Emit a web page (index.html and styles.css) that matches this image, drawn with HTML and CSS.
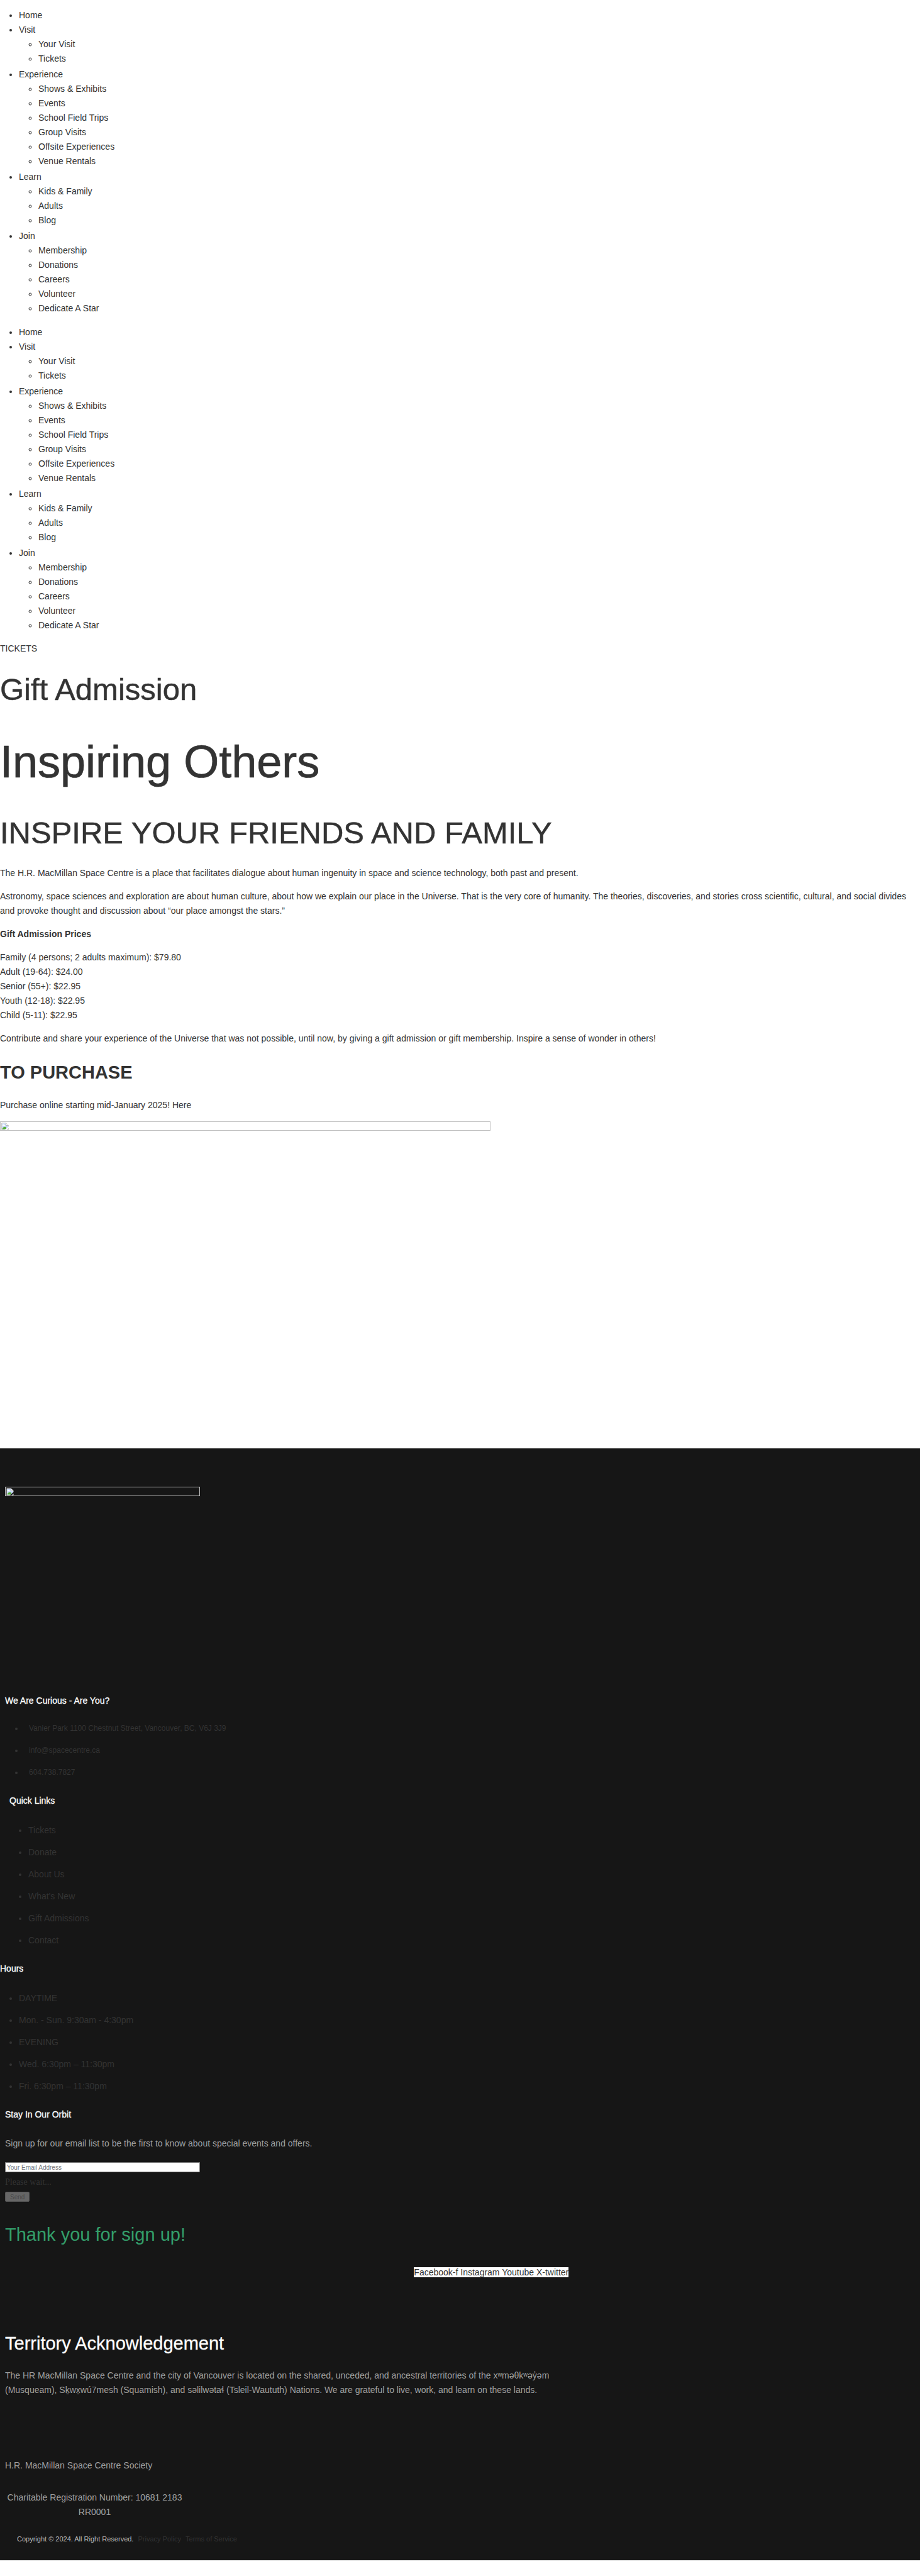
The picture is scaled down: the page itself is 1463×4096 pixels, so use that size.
FILE: index.html
```html
<!DOCTYPE html>
<html lang="en">
<head>
<meta charset="utf-8">
<title>Gift Admission - H.R. MacMillan Space Centre</title>
<link rel="stylesheet" href="styles.css">
</head>
<body>
<header>
  <nav aria-label="Main">
    <ul class="menu">
      <li><a href="#">Home</a></li>
      <li><a href="#">Visit</a>
        <ul class="submenu">
          <li><a href="#">Your Visit</a></li>
          <li><a href="#">Tickets</a></li>
        </ul>
      </li>
      <li><a href="#">Experience</a>
        <ul class="submenu">
          <li><a href="#">Shows &amp; Exhibits</a></li>
          <li><a href="#">Events</a></li>
          <li><a href="#">School Field Trips</a></li>
          <li><a href="#">Group Visits</a></li>
          <li><a href="#">Offsite Experiences</a></li>
          <li><a href="#">Venue Rentals</a></li>
        </ul>
      </li>
      <li><a href="#">Learn</a>
        <ul class="submenu">
          <li><a href="#">Kids &amp; Family</a></li>
          <li><a href="#">Adults</a></li>
          <li><a href="#">Blog</a></li>
        </ul>
      </li>
      <li><a href="#">Join</a>
        <ul class="submenu">
          <li><a href="#">Membership</a></li>
          <li><a href="#">Donations</a></li>
          <li><a href="#">Careers</a></li>
          <li><a href="#">Volunteer</a></li>
          <li><a href="#">Dedicate A Star</a></li>
        </ul>
      </li>
    </ul>
  </nav>
  <nav aria-label="Mobile">
    <ul class="menu">
      <li><a href="#">Home</a></li>
      <li><a href="#">Visit</a>
        <ul class="submenu">
          <li><a href="#">Your Visit</a></li>
          <li><a href="#">Tickets</a></li>
        </ul>
      </li>
      <li><a href="#">Experience</a>
        <ul class="submenu">
          <li><a href="#">Shows &amp; Exhibits</a></li>
          <li><a href="#">Events</a></li>
          <li><a href="#">School Field Trips</a></li>
          <li><a href="#">Group Visits</a></li>
          <li><a href="#">Offsite Experiences</a></li>
          <li><a href="#">Venue Rentals</a></li>
        </ul>
      </li>
      <li><a href="#">Learn</a>
        <ul class="submenu">
          <li><a href="#">Kids &amp; Family</a></li>
          <li><a href="#">Adults</a></li>
          <li><a href="#">Blog</a></li>
        </ul>
      </li>
      <li><a href="#">Join</a>
        <ul class="submenu">
          <li><a href="#">Membership</a></li>
          <li><a href="#">Donations</a></li>
          <li><a href="#">Careers</a></li>
          <li><a href="#">Volunteer</a></li>
          <li><a href="#">Dedicate A Star</a></li>
        </ul>
      </li>
    </ul>
  </nav>
  <a href="#">TICKETS</a>
</header>
<main class="content">
  <h1 class="title">Gift Admission</h1>
  <h2 class="display">Inspiring Others</h2>
  <h2 class="title">INSPIRE YOUR FRIENDS AND FAMILY</h2>
  <p>The H.R. MacMillan Space Centre is a place that facilitates dialogue about human ingenuity in space and science technology, both past and present.</p>
  <p>Astronomy, space sciences and exploration are about human culture, about how we explain our place in the Universe. That is the very core of humanity. The theories, discoveries, and stories cross scientific, cultural, and social divides and provoke thought and discussion about “our place amongst the stars.”</p>
  <p><strong>Gift Admission Prices</strong></p>
  <p>Family (4 persons; 2 adults maximum): $79.80<br>Adult (19-64): $24.00<br>Senior (55+): $22.95<br>Youth (12-18): $22.95<br>Child (5-11): $22.95</p>
  <p>Contribute and share your experience of the Universe that was not possible, until now, by giving a gift admission or gift membership. Inspire a sense of wonder in others!</p>
  <h3 class="subtitle">TO PURCHASE</h3>
  <p>Purchase online starting mid-January 2025! <a href="#">Here</a></p>
  <div class="photo">
    <svg class="missing" viewBox="0 0 16 16" aria-hidden="true"><path d="M1 1h9l5 5v9H1z" fill="#fff" stroke="#a3a3a3"/><path d="M2 2h8v4h4v8H2z" fill="#c3d5f7"/><path d="M3 6a2 2 0 0 1 4-1q2 0 2 2H3z" fill="#fff"/><path d="M2 14q1-5 6-5 3 0 3 5z" fill="#54ad35"/><path d="M10 1v5h5" fill="#fff" stroke="#a3a3a3"/><path d="M7 16l9-8v3l-5 5z" fill="#fff"/></svg>
  </div>
</main>
<footer class="footer">
  <div class="photo logo">
    <svg class="missing" viewBox="0 0 16 16" aria-hidden="true"><path d="M1 1h9l5 5v9H1z" fill="#fff" stroke="#a3a3a3"/><path d="M2 2h8v4h4v8H2z" fill="#c3d5f7"/><path d="M3 6a2 2 0 0 1 4-1q2 0 2 2H3z" fill="#fff"/><path d="M2 14q1-5 6-5 3 0 3 5z" fill="#54ad35"/><path d="M10 1v5h5" fill="#fff" stroke="#a3a3a3"/><path d="M7 16l9-8v3l-5 5z" fill="#161616"/></svg>
  </div>
  <section class="block inset">
    <h4 class="label">We Are Curious - Are You?</h4>
    <ul class="links icons">
      <li>Vanier Park 1100 Chestnut Street, Vancouver, BC, V6J 3J9</li>
      <li><a href="#">info@spacecentre.ca</a></li>
      <li><a href="#">604.738.7827</a></li>
    </ul>
  </section>
  <section class="block quick">
    <h4 class="label">Quick Links</h4>
    <ul class="links">
      <li><a href="#">Tickets</a></li>
      <li><a href="#">Donate</a></li>
      <li><a href="#">About Us</a></li>
      <li><a href="#">What's New</a></li>
      <li><a href="#">Gift Admissions</a></li>
      <li><a href="#">Contact</a></li>
    </ul>
  </section>
  <section class="block">
    <h4 class="label">Hours</h4>
    <ul class="links">
      <li>DAYTIME</li>
      <li>Mon. - Sun. 9:30am - 4:30pm</li>
      <li>EVENING</li>
      <li>Wed. 6:30pm – 11:30pm</li>
      <li>Fri. 6:30pm – 11:30pm</li>
    </ul>
  </section>
  <section class="inset">
    <h4 class="label">Stay In Our Orbit</h4>
    <p class="muted intro">Sign up for our email list to be the first to know about special events and offers.</p>
    <form class="signup">
      <input class="email" type="email" placeholder="Your Email Address" aria-label="Your Email Address">
      <span class="wait">Please wait...</span>
      <button class="send" type="button" disabled>Send</button>
    </form>
    <h3 class="thanks">Thank you for sign up!</h3>
  </section>
  <div class="social"><span class="chips"><a href="#">Facebook-f</a> <a href="#">Instagram</a> <a href="#">Youtube</a> <a href="#">X-twitter</a></span></div>
  <section class="inset territory">
    <h3 class="heading">Territory Acknowledgement</h3>
    <p class="muted">The HR MacMillan Space Centre and the city of Vancouver is located on the shared, unceded, and ancestral territories of the xʷməθkʷəy̓əm (Musqueam), Sḵwx̱wú7mesh (Squamish), and səlilwətaɬ (Tsleil-Waututh) Nations. We are grateful to live, work, and learn on these lands.</p>
  </section>
  <section class="inset legal">
    <p class="muted">H.R. MacMillan Space Centre Society</p>
    <p class="muted charity">Charitable Registration Number: 10681 2183 RR0001</p>
    <p class="copyright">Copyright © 2024. All Right Reserved. <a href="#">Privacy Policy</a> <a href="#">Terms of Service</a></p>
  </section>
</footer>
</body>
</html>
```

FILE: styles.css
```css
* { box-sizing: border-box; }

body {
  margin: 0;
  background: #fff;
  color: #333;
  font-family: "Liberation Sans", Arial, Helvetica, sans-serif;
  font-size: 14px;
  line-height: 23px;
}

a { color: inherit; text-decoration: none; }
h1, h2, h3, h4, p, ul { margin: 0; font-weight: 400; }

/* navigation */
.menu { padding: 13px 0 0 30px; }
.submenu { padding: 0 0 2px 31px; }
header { padding-bottom: 24px; }
header > a { display: block; padding-top: 12px; }

/* page content */
.content { padding-bottom: 505px; }
.content p { margin-bottom: 14px; }
.title, .display { -webkit-text-stroke: 0.01em #333; }
.title { font-size: 49px; line-height: 59px; }
.display { margin: 41px 0 40px; font-size: 72px; line-height: 88px; }
h2.title { margin-bottom: 23px; }
.content .subtitle { margin: 25px 0 23px; font-size: 29px; line-height: 35px; font-weight: 700; }

.photo { width: 780px; max-width: 100%; height: 15px; padding: 1px; border: 1px solid #c0c0c0; }
.missing { display: block; width: 12px; height: 12px; }

/* footer */
.footer { padding: 61px 0 22px; background: #161616; }
.logo { width: 310px; margin-left: 8px; }
.inset { padding-left: 8px; padding-right: 8px; }
.logo + .block { margin-top: 314px; }
.block { margin-bottom: 16px; }
.quick { padding-left: 15px; }
.label { color: #fff; font-size: 14px; line-height: 23px; -webkit-text-stroke: 0.02em #fff; }
.links { padding: 18px 0 0 30px; }
.links li { line-height: 35px; }
.icons { padding-top: 15px; font-size: 12px; }
.icons li { padding-left: 8px; }
.muted { color: #a0a0a0; }
.intro { margin: 23px 0 18px; }

.signup { display: flex; flex-direction: column; align-items: flex-start; }
.email { width: 310px; height: 16px; padding: 0 2px; border: 1px solid #767676; background: #fff; font: 10px "Liberation Sans", Arial, sans-serif; }
.email::placeholder { color: #757575; }
.wait { margin: 4px 0; font-family: "Liberation Serif", "Times New Roman", serif; }
.send { height: 16px; padding: 0 7px; border: 1px solid #555; border-radius: 2px; background: #666; color: #4a4a4a; font: 10px "Liberation Sans", Arial, sans-serif; }
.thanks { margin-top: 35px; color: #339e6a; font-size: 29px; line-height: 35px; }

.social { padding: 31px 0 0 45%; }
.chips { background: #fff; }
.territory { max-width: 900px; margin-top: 84px; }
.heading { margin-bottom: 22px; color: #fff; font-size: 29px; line-height: 35px; -webkit-text-stroke: 0.01em #fff; }
.legal { margin-top: 97px; }
.charity { width: 285px; margin-top: 28px; text-align: center; }
.copyright { padding: 20px 0 0 19px; color: #bbb; font-size: 11px; line-height: 23px; }
.copyright a { margin-left: 4px; color: #333; }
```
